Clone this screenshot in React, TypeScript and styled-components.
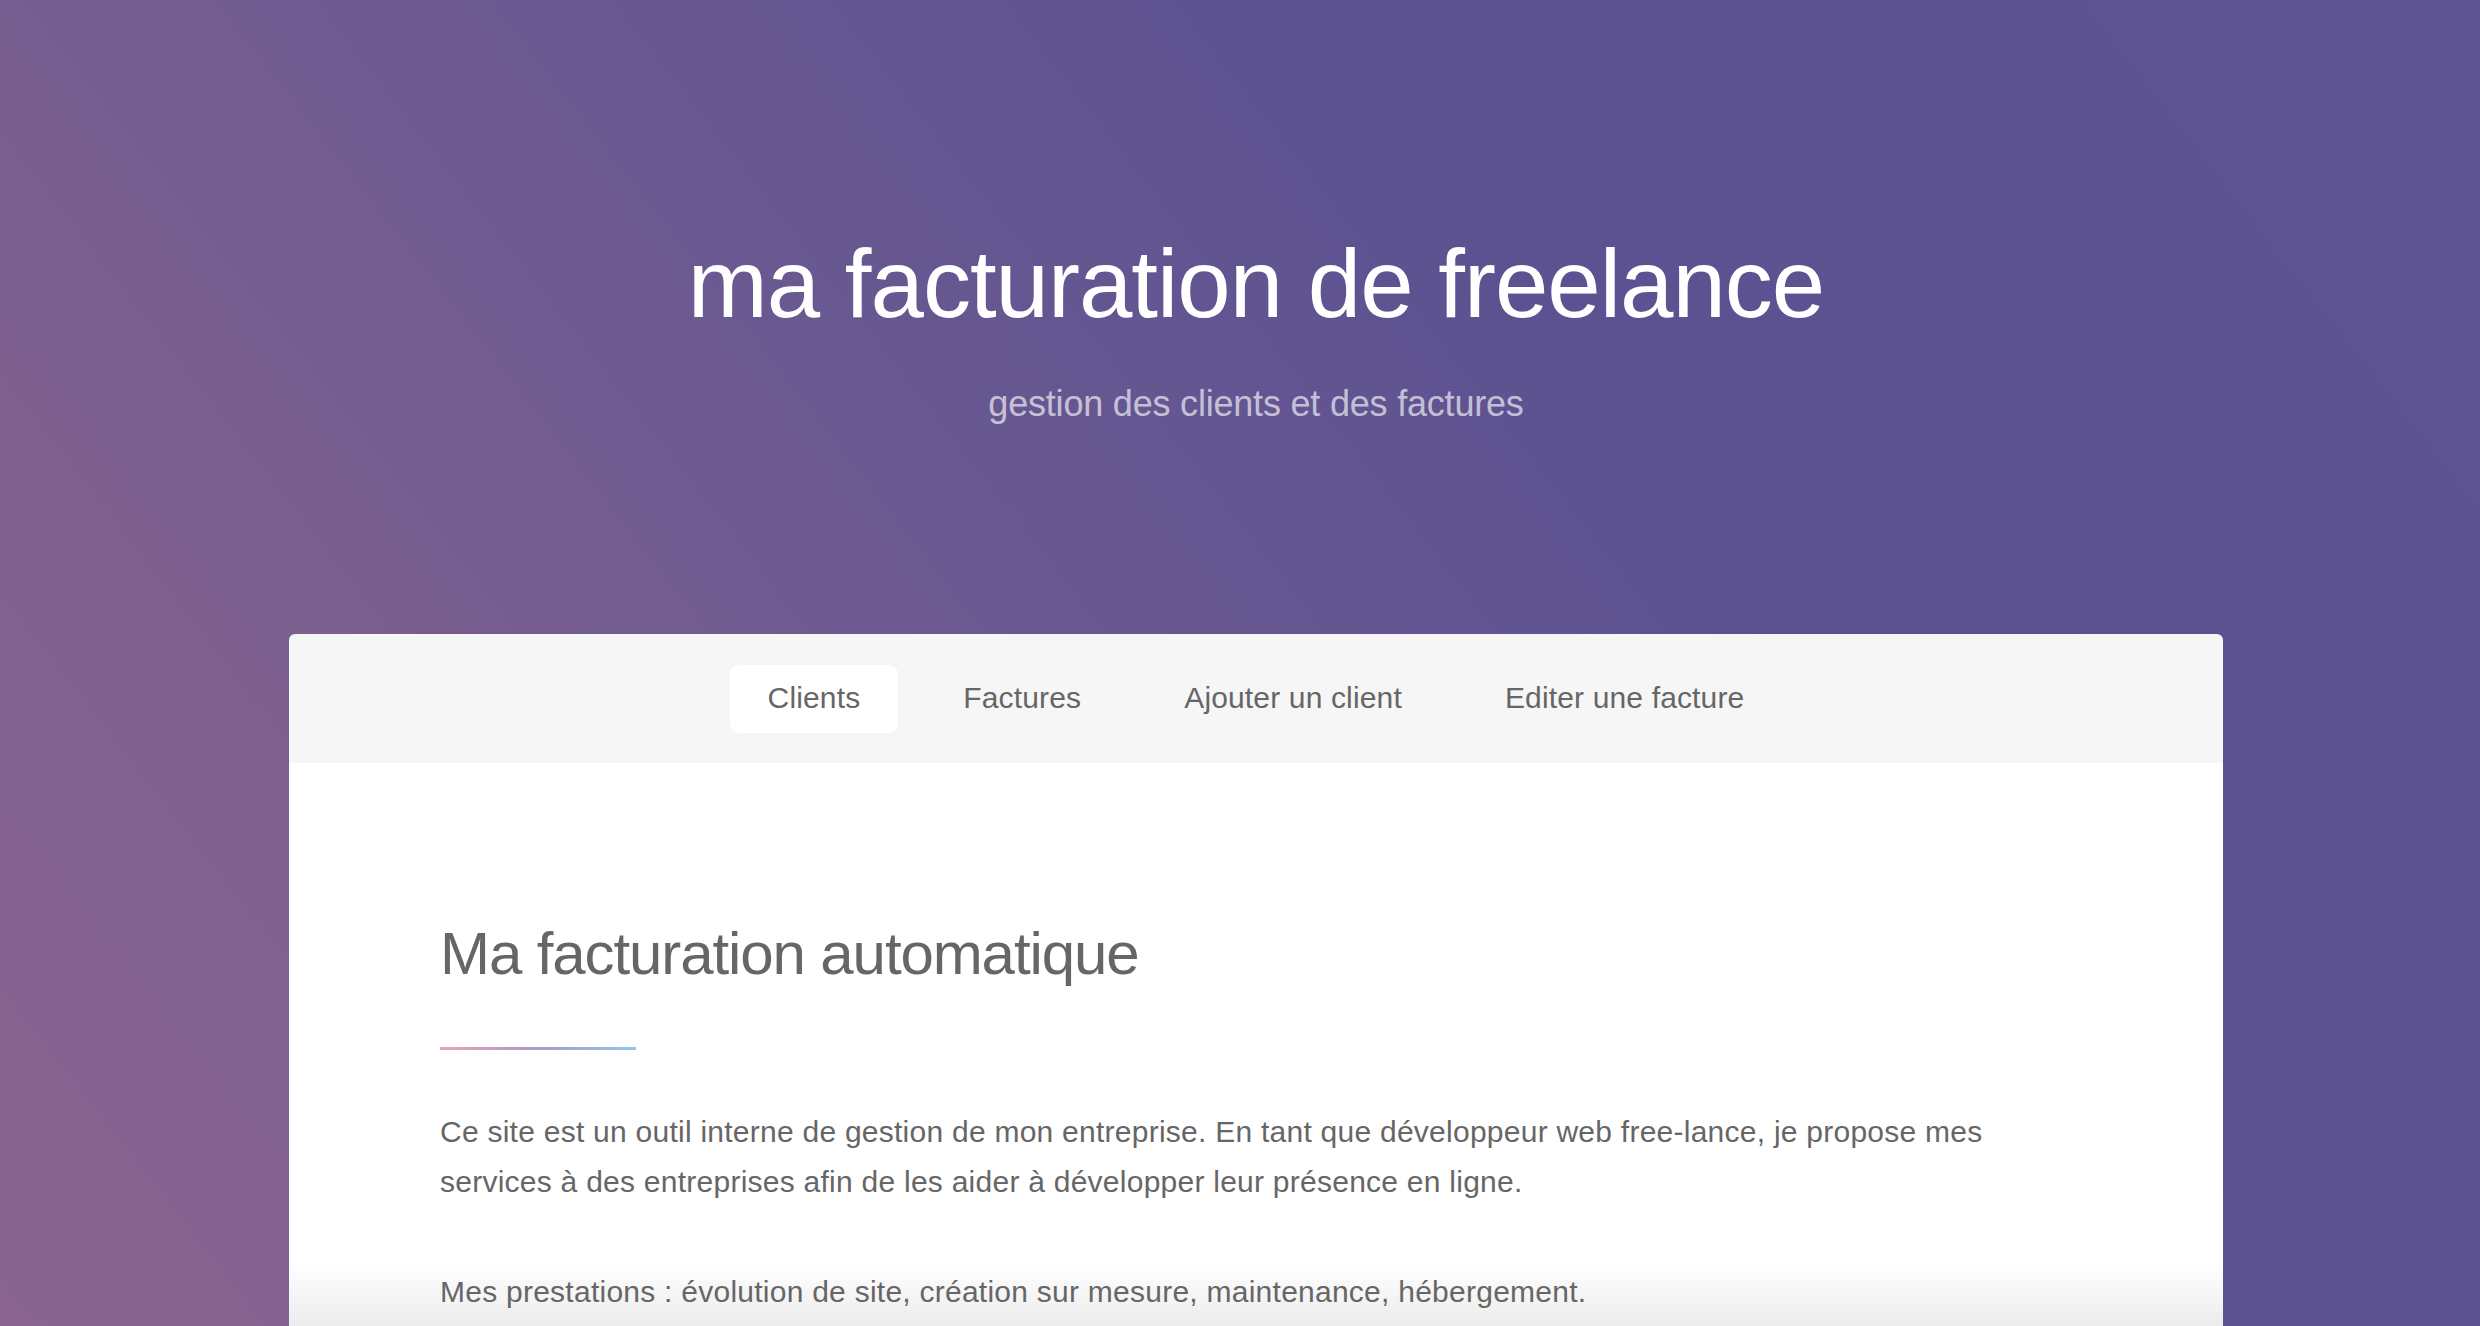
import React from "react";
import styled, { createGlobalStyle } from "styled-components";

const GlobalStyle = createGlobalStyle`
  html, body {
    margin: 0;
    padding: 0;
  }
  body {
    font-family: "Liberation Sans", Arial, Helvetica, sans-serif;
    background: #5c5291;
    overflow: hidden;
  }
`;

const Page = styled.div`
  min-height: 100vh;
  padding-left: 32px;
  background: linear-gradient(
    52deg,
    #8f6690 0%,
    #7d608f 30%,
    #685891 52%,
    #5c5291 70%,
    #5e5491 100%
  );
  display: flex;
  flex-direction: column;
  align-items: center;
`;

const Hero = styled.header`
  display: flex;
  flex-direction: column;
  align-items: center;
  padding-top: 236px;
  padding-bottom: 212px;
`;

const Title = styled.h1`
  margin: 0;
  font-size: 96px;
  line-height: 1;
  font-weight: 400;
  letter-spacing: -1px;
  color: #ffffff;
`;

const Subtitle = styled.p`
  margin: 54px 0 0;
  font-size: 36px;
  line-height: 1;
  letter-spacing: -0.2px;
  color: rgba(255, 255, 255, 0.65);
`;

const Card = styled.main`
  width: 1934px;
  border-radius: 6px 6px 0 0;
  overflow: hidden;
  display: flex;
  flex-direction: column;
`;

const Nav = styled.nav`
  height: 129px;
  background: #f6f6f6;
  display: flex;
  align-items: center;
  justify-content: center;
  gap: 27px;
`;

const NavItem = styled.a<{ $active?: boolean }>`
  display: block;
  height: 68px;
  line-height: 66px;
  padding: 0 38px;
  border-radius: 9px;
  font-size: 30px;
  letter-spacing: 0.15px;
  color: #666666;
  text-decoration: none;
  background: ${(p) => (p.$active ? "#ffffff" : "transparent")};
`;

const Body = styled.section`
  min-height: 900px;
  padding: 161px 151px 0;
  background: linear-gradient(
    to bottom,
    #ffffff 0,
    #ffffff 499px,
    #ececec 563px,
    #ececec 100%
  );
`;

const Heading = styled.h2`
  margin: 0;
  font-size: 60px;
  line-height: 1;
  font-weight: 400;
  letter-spacing: -1.1px;
  color: #666666;
`;

const Divider = styled.div`
  width: 196px;
  height: 3px;
  margin-top: 63px;
  background: linear-gradient(to right, #e9a4b3, #a69bc9 50%, #93c5ee);
`;

const Text = styled.div`
  margin-top: 57px;
`;

const Paragraph = styled.p`
  margin: 0;
  font-size: 30px;
  line-height: 50px;
  letter-spacing: 0.25px;
  color: #666666;
  & + & {
    margin-top: 60px;
  }
`;

export default function App() {
  const items = ["Clients", "Factures", "Ajouter un client", "Editer une facture"];
  return (
    <>
      <GlobalStyle />
      <Page>
        <Hero>
          <Title>ma facturation de freelance</Title>
          <Subtitle>gestion des clients et des factures</Subtitle>
        </Hero>
        <Card>
          <Nav>
            {items.map((it, i) => (
              <NavItem key={it} href="#" $active={i === 0}>
                {it}
              </NavItem>
            ))}
          </Nav>
          <Body>
            <Heading>Ma facturation automatique</Heading>
            <Divider />
            <Text>
              <Paragraph>
                Ce site est un outil interne de gestion de mon entreprise. En tant que
                développeur web free-lance, je propose mes services à des entreprises afin
                de les aider à développer leur présence en ligne.
              </Paragraph>
              <Paragraph>
                Mes prestations : évolution de site, création sur mesure, maintenance,
                hébergement.
              </Paragraph>
            </Text>
          </Body>
        </Card>
      </Page>
    </>
  );
}
